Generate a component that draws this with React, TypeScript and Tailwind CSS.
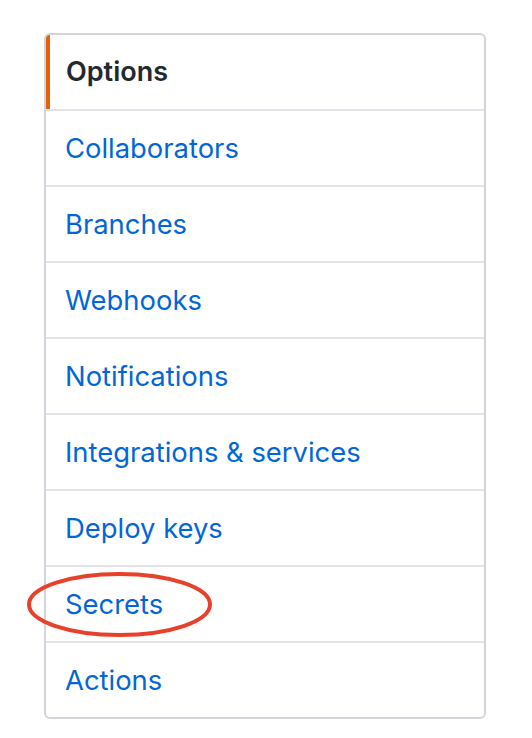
import React from "react";

const items = [
  "Collaborators",
  "Branches",
  "Webhooks",
  "Notifications",
  "Integrations & services",
  "Deploy keys",
  "Secrets",
  "Actions",
];

export default function App() {
  return (
    <div
      className="relative w-[532px] h-[738px] bg-white pt-[33px] pl-[44px]"
      style={{ fontFamily: "Inter, 'Liberation Sans', sans-serif" }}
    >
      <nav className="w-[442px] border-2 border-[#d1d5da] rounded-[6px] overflow-hidden">
        <div className="relative h-[76px] flex items-center pl-[20px] border-b-2 border-[#e1e4e8]">
          <span className="absolute left-0 top-0 bottom-0 w-[4px] bg-[#e36209]" />
          <span className="text-[27px] font-semibold text-[#24292e]">Options</span>
        </div>
        {items.map((t, i) => (
          <div
            key={t}
            className={
              i === items.length - 1
                ? "h-[74px] flex items-center pl-[19px] pt-[2px]"
                : "h-[76px] flex items-center pl-[19px] pt-[2px] border-b-2 border-[#e1e4e8]"
            }
          >
            <span className="text-[27.4px] text-[#0366d6]">{t}</span>
          </div>
        ))}
      </nav>
      <svg
        className="absolute left-0 top-0 pointer-events-none"
        width="532"
        height="738"
        viewBox="0 0 532 738"
      >
        <ellipse cx="119.5" cy="604.5" rx="90.5" ry="30.5" fill="none" stroke="#e8412b" strokeWidth="4" />
      </svg>
    </div>
  );
}
